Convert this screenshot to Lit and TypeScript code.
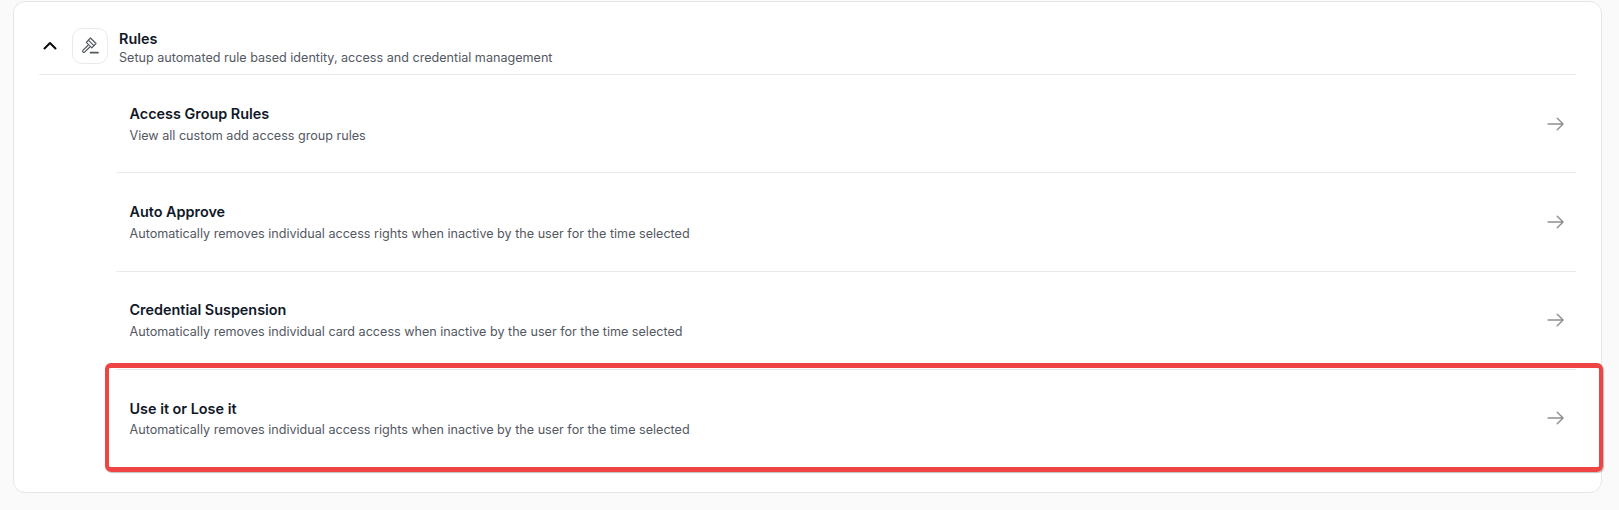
import { LitElement, css, html, svg } from "lit";
import { customElement } from "lit/decorators.js";

const rules = [
  { title: "Access Group Rules", text: "View all custom add access group rules" },
  { title: "Auto Approve", text: "Automatically removes individual access rights when inactive by the user for the time selected" },
  { title: "Credential Suspension", text: "Automatically removes individual card access when inactive by the user for the time selected" },
  { title: "Use it or Lose it", text: "Automatically removes individual access rights when inactive by the user for the time selected" },
];

const arrow = svg`<path d="M2.500 12h18M13.500 5l7 7-7 7" fill="none" stroke="currentColor" stroke-width="1.700" stroke-linecap="round" stroke-linejoin="round"/>`;

@customElement("app-root")
export class AppRoot extends LitElement {
  static styles = css`
    :host {
      display: block;
      height: 510px;
      box-sizing: border-box;
      padding: 1px 17px 0 13px;
      background: #fafafa;
      font-family: Inter, "Noto Sans", sans-serif;
      color: #101828;
      overflow: hidden;
    }

    .card {
      position: relative;
      height: 492px;
      box-sizing: border-box;
      padding: 0 25px;
      background: #fff;
      border: 1px solid #e6e6e6;
      border-radius: 12px;
    }

    .head {
      display: flex;
      align-items: center;
      height: 73px;
      box-sizing: border-box;
      padding-top: 16px;
      border-bottom: 1px solid #e9eaeb;
    }

    .chevron {
      width: 18px;
      height: 18px;
      margin-left: 2px;
      margin-right: 13px;
      color: #0a0a0a;
    }

    .icon-box {
      display: flex;
      align-items: center;
      justify-content: center;
      width: 36px;
      height: 36px;
      box-sizing: border-box;
      margin-right: 11px;
      border: 1px solid #e9eaeb;
      border-radius: 10px;
      color: #535862;
    }

    .icon-box svg {
      width: 20px;
      height: 20px;
    }

    .name {
      font-size: 14.400px;
      font-weight: 600;
      line-height: 20px;
    }

    .desc {
      font-size: 12.600px;
      line-height: 16px;
      color: #535862;
    }

    .head .text {
      padding-top: 2px;
    }

    .head .name {
      margin-bottom: 1px;
    }

    .rows {
      margin-left: 77px;
    }

    .row {
      display: flex;
      align-items: center;
      justify-content: space-between;
      height: 98.300px;
      box-sizing: border-box;
      padding: 0 10px 0 13.500px;
      border-bottom: 1px solid #e9eaeb;
    }

    .row:last-child {
      padding-bottom: 2px;
      border-bottom: none;
    }

    .row .name {
      margin-bottom: 4px;
    }

    .row:last-child .name {
      margin-bottom: 3px;
    }

    .arrow {
      width: 20px;
      height: 20px;
      color: #8f8f8f;
    }

    .highlight {
      position: absolute;
      left: 91px;
      top: 361px;
      width: 1498px;
      height: 109px;
      box-sizing: border-box;
      border-style: solid;
      border-color: #ef4444;
      border-width: 5px 4px;
      border-radius: 6px;
      box-shadow: 1px 1px 1px rgba(0, 0, 0, 0.25);
      pointer-events: none;
    }
  `;

  render() {
    return html`
      <div class="card">
        <div class="head">
          <svg class="chevron" viewBox="0 0 18 18">
            <path d="M3.500 11.500 9 6l5.500 5.500" fill="none" stroke="currentColor" stroke-width="2" stroke-linecap="round" stroke-linejoin="round"/>
          </svg>
          <div class="icon-box">
            <svg viewBox="0 0 20 20" fill="none" stroke="currentColor" stroke-width="1.200" stroke-linejoin="round" stroke-linecap="round">
              <path d="M10.500 2 16 7.500l-4.200 4.300L6.300 6.300Z"/>
              <path d="M8.300 4.200 13.800 9.700"/>
              <path d="M7.800 9.500 2.900 14.400a1.100 1.100 0 0 0 0 1.500l.2.200a1.100 1.100 0 0 0 1.500 0L9.600 11.200"/>
              <path d="M10.500 16.700h7.500" stroke-width="1.700"/>
            </svg>
          </div>
          <div class="text">
            <div class="name">Rules</div>
            <div class="desc">Setup automated rule based identity, access and credential management</div>
          </div>
        </div>
        <div class="rows">
          ${rules.map(
            (r) => html`
              <div class="row">
                <div>
                  <div class="name">${r.title}</div>
                  <div class="desc">${r.text}</div>
                </div>
                <svg class="arrow" viewBox="0 0 24 24">${arrow}</svg>
              </div>
            `
          )}
        </div>
        <div class="highlight"></div>
      </div>
    `;
  }
}
